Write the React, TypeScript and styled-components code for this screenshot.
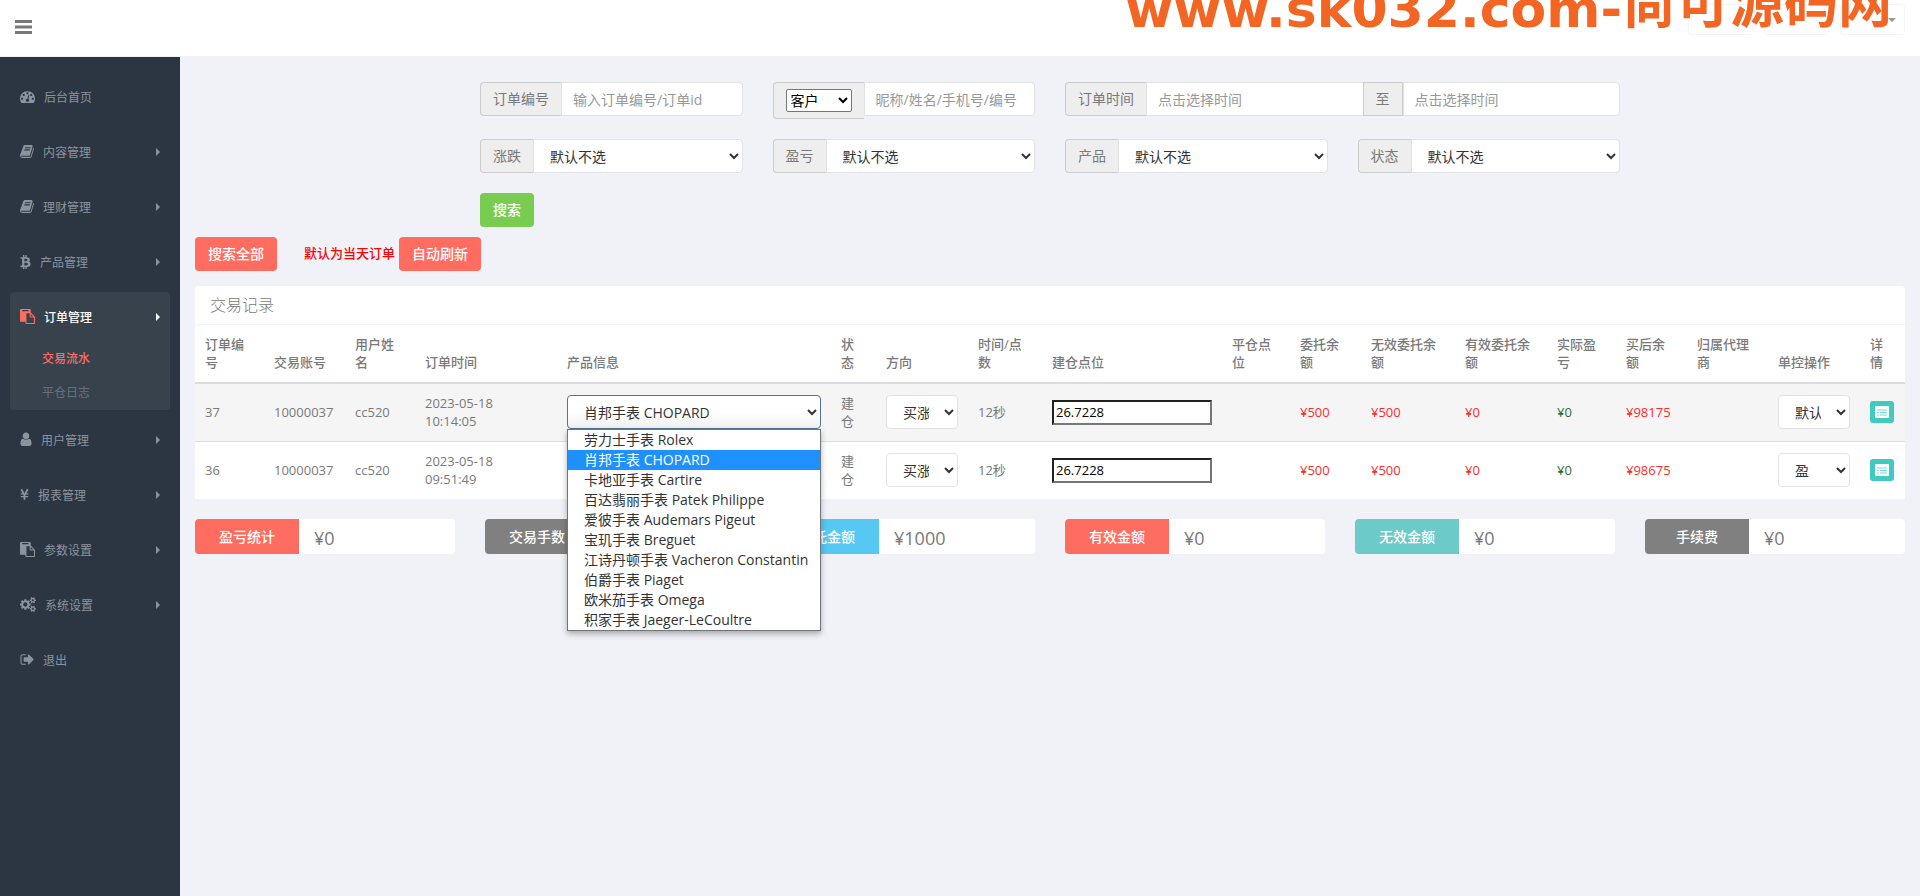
import React from "react";
import styled, { createGlobalStyle, css } from "styled-components";
import { FaBtc, FaYenSign } from "react-icons/fa";

const GlobalStyle = createGlobalStyle`
  *, *::before, *::after { box-sizing: border-box; }
  body {
    margin: 0;
    background: #f1f2f7;
    color: #797979;
    font-family: "Open Sans", "Noto Sans CJK SC", sans-serif;
    font-size: 13px;
    line-height: 18px;
  }
  button, input, select { font-family: inherit; }
  ul { list-style: none; margin: 0; padding: 0; }
`;

/* ---------- header ---------- */

const Header = styled.header`
  position: relative;
  display: flex;
  justify-content: space-between;
  height: 57px;
  padding: 0 15px;
  background: #fff;
  border-bottom: 1px solid #f1f2f7;
  overflow: hidden;
`;

const MenuToggle = styled.button`
  align-self: flex-start;
  display: flex;
  margin-top: 20px;
  padding: 0;
  border: 0;
  background: none;
  color: #797979;
`;

const TopMenu = styled.div`
  display: flex;
  gap: 11px;
  height: 35px;
  padding-top: 4px;
`;

const TopButton = styled.button`
  display: flex;
  align-items: center;
  justify-content: flex-end;
  width: 65px;
  padding: 0 8px;
  border: 1px solid #f5f5f5;
  border-radius: 4px;
  background: #fff;
  color: #999;
`;

const Watermark = styled.div`
  position: absolute;
  top: -37px;
  right: 28px;
  display: flex;
  align-items: flex-end;
  color: #f26522;
  font-weight: 700;
  white-space: nowrap;
`;

const WatermarkHost = styled.span`
  font-family: "DejaVu Sans", sans-serif;
  font-size: 52px;
  line-height: 56px;
`;

const WatermarkName = styled.span`
  font-family: "Noto Sans CJK SC", sans-serif;
  font-size: 54px;
  line-height: 74px;
`;

/* ---------- sidebar ---------- */

const Body = styled.div`
  display: flex;
  min-height: calc(100vh - 57px);
`;

const Sidebar = styled.nav`
  flex: 0 0 180px;
  padding: 15px 10px;
  background: #2b3642;
  font-size: 12px;
`;

const MenuItem = styled.li<{ $active?: boolean }>`
  margin-bottom: 5px;
  border-radius: 4px;
  background: ${(p) => (p.$active ? "#37424d" : "transparent")};
`;

const MenuLink = styled.a<{ $active?: boolean }>`
  display: flex;
  align-items: center;
  height: 50px;
  padding: 0 10px;
  color: ${(p) => (p.$active ? "#fff" : "#8b949d")};
  font-weight: ${(p) => (p.$active ? 500 : 400)};
  text-decoration: none;
`;

const MenuIcon = styled.span<{ $active?: boolean }>`
  display: flex;
  margin-right: 9px;
  padding-bottom: 1px;
  color: ${(p) => (p.$active ? "#ff6c60" : "inherit")};
`;

const MenuLabel = styled.span`
  padding-top: 2px;
`;

const MenuCaret = styled.svg`
  margin-left: auto;
`;

const SubMenu = styled.ul`
  padding: 0 0 0 32px;
`;

const SubLink = styled.a<{ $active?: boolean }>`
  display: block;
  color: ${(p) => (p.$active ? "#ff6c60" : "#66717c")};
  font-weight: ${(p) => (p.$active ? 500 : 400)};
  line-height: 34px;
  text-decoration: none;
`;

/* ---------- content ---------- */

const Content = styled.main`
  flex: 1;
  min-width: 0;
  padding: 25px 15px 15px;
`;

const Filters = styled.form`
  display: grid;
  grid-template-columns: repeat(4, 1fr);
  column-gap: 30px;
  row-gap: 20px;
  align-items: start;
  max-width: 1140px;
  margin: 0 auto;
`;

const Group = styled.div<{ $wide?: boolean }>`
  display: flex;
  align-items: flex-start;
  grid-column: span ${(p) => (p.$wide ? 2 : 1)};
`;

const addon = css`
  flex: none;
  padding: 6px 12px;
  border: 1px solid #ccc;
  background: #eee;
  font-size: 14px;
  line-height: 20px;
`;

const Addon = styled.label`
  ${addon}
  border-right: 0;
  border-radius: 4px 0 0 4px;
`;

const MiddleAddon = styled.label`
  ${addon}
`;

const AddonBox = styled.div`
  ${addon}
  display: flex;
  border-right: 0;
  border-radius: 4px 0 0 4px;
`;

const SmallSelect = styled.select`
  width: 66px;
  height: 23px;
  border: 1px solid #767676;
  border-radius: 2px;
  background: #fff;
  color: #000;
  font-size: 14px;
`;

const field = css`
  flex: 1;
  min-width: 0;
  width: 100%;
  height: 34px;
  padding: 6px 12px;
  border: 1px solid #e2e2e4;
  background: #fff;
  color: #333;
  font-size: 14px;
`;

const TextField = styled.input<{ $middle?: boolean }>`
  ${field}
  padding: 6px 11px;
  border-radius: ${(p) => (p.$middle ? "0" : "0 4px 4px 0")};
  border-right-width: ${(p) => (p.$middle ? "0" : "1px")};
  &::placeholder { color: #999; opacity: 1; }
`;

const SelectField = styled.select`
  ${field}
  border-radius: 0 4px 4px 0;
`;

const CellSelect = styled.select<{ $open?: boolean }>`
  ${field}
  display: block;
  border-radius: 4px;
  ${(p) =>
    p.$open &&
    css`
      border-color: #517397;
      background: linear-gradient(#fff 50%, #f0f0f0);
    `}
`;

const Button = styled.button<{ $tone: string }>`
  justify-self: start;
  height: 34px;
  padding: 0 13px;
  border: 0;
  border-radius: 4px;
  background: ${(p) => p.$tone};
  color: #fff;
  font-size: 14px;
  font-weight: 500;
  line-height: 20px;
`;

const Actions = styled.div`
  display: flex;
  align-items: center;
  margin: 10px 0 15px;
`;

const Hint = styled.span`
  margin: 0 4px 0 27px;
  padding-bottom: 3px;
  color: #f00;
  font-weight: 500;
`;

const Panel = styled.section`
  border-radius: 4px;
  background: #fff;
`;

const PanelTitle = styled.h2`
  margin: 0;
  padding: 0 15px;
  border-bottom: 1px solid #eff2f7;
  font-size: 16px;
  font-weight: 300;
  line-height: 38px;
`;

const DataTable = styled.table`
  width: 100%;
  table-layout: fixed;
  border-collapse: collapse;
`;

const HeadCell = styled.th`
  height: 58px;
  padding: 8px 10px 11px;
  border-bottom: 2px solid #ddd;
  font-weight: 500;
  text-align: left;
  vertical-align: bottom;
`;

const Row = styled.tr<{ $striped?: boolean }>`
  background: ${(p) => (p.$striped ? "#f5f5f5" : "#fff")};
  & + & { border-top: 1px solid #ddd; }
`;

const Cell = styled.td<{ $tone?: string }>`
  height: 58px;
  padding: 10px;
  color: ${(p) => p.$tone ?? "inherit"};
`;

const PriceInput = styled.input`
  display: block;
  width: 100%;
  height: 25px;
  padding: 1px 2px;
  border: 2px inset #767676;
  background: #fff;
  color: #000;
  font-size: 13px;
`;

const DetailButton = styled.button`
  display: flex;
  align-items: center;
  justify-content: center;
  width: 24px;
  height: 22px;
  padding: 0;
  border: 0;
  border-radius: 3px;
  background: #41cac0;
`;

const SelectAnchor = styled.div`
  position: relative;
`;

const OptionList = styled.ul`
  position: absolute;
  z-index: 2;
  top: 100%;
  left: 0;
  right: 0;
  border: 1px solid #70757c;
  background: #fff;
  box-shadow: 0 3px 6px rgba(0, 0, 0, 0.3);
  color: #333;
  font-size: 14px;
  line-height: 20px;
`;

const Option = styled.li<{ $selected?: boolean }>`
  height: 20px;
  padding: 0 16px;
  background: ${(p) => (p.$selected ? "#1e90ff" : "transparent")};
  color: ${(p) => (p.$selected ? "#fff" : "inherit")};
  white-space: nowrap;
`;

const Stats = styled.div`
  display: grid;
  grid-template-columns: repeat(6, 1fr);
  gap: 30px;
  margin-top: 20px;
`;

const Stat = styled.div`
  display: flex;
  height: 35px;
  border-radius: 4px;
  overflow: hidden;
  background: #fff;
`;

const StatLabel = styled.div<{ $tone: string }>`
  flex: 0 0 40%;
  background: ${(p) => p.$tone};
  color: #fff;
  font-size: 14px;
  font-weight: 500;
  line-height: 35px;
  text-align: center;
`;

const StatValue = styled.div`
  padding: 0 15px;
  font-size: 18px;
  line-height: 38px;
`;

/* ---------- icons ---------- */

type Glyph = { box: string; w: number; d: string };

const glyphs: Record<string, Glyph> = {
  dashboard: {
    box: "0 0 1792 1792",
    w: 15,
    d: "M384 1152q0-53-37.5-90.5t-90.5-37.5-90.5 37.5-37.5 90.5 37.5 90.5 90.5 37.5 90.5-37.5 37.5-90.5zm192-448q0-53-37.5-90.5t-90.5-37.5-90.5 37.5-37.5 90.5 37.5 90.5 90.5 37.5 90.5-37.5 37.5-90.5zm428 481l101-382q6-26-7.5-48.5t-38.5-29.5-48 6.5-30 39.5l-101 382q-60 5-107 43.5t-63 98.5q-20 77 20 146t117 89 146-20 89-117q16-60-6-117t-72-91zm660-33q0-53-37.5-90.5t-90.5-37.5-90.5 37.5-37.5 90.5 37.5 90.5 90.5 37.5 90.5-37.5 37.5-90.5zm-640-640q0-53-37.5-90.5t-90.5-37.5-90.5 37.5-37.5 90.5 37.5 90.5 90.5 37.5 90.5-37.5 37.5-90.5zm448 192q0-53-37.5-90.5t-90.5-37.5-90.5 37.5-37.5 90.5 37.5 90.5 90.5 37.5 90.5-37.5 37.5-90.5zm320 448q0 261-141 483-19 29-54 29h-1402q-35 0-54-29-141-221-141-483 0-182 71-348t191-286 286-191 348-71 348 71 286 191 191 286 71 348z",
  },
  book: {
    box: "64 0 1664 1792",
    w: 14,
    d: "M1703 478q40 57 18 129l-275 906q-19 64-76.5 107.5t-122.5 43.5h-923q-77 0-148.5-53.5t-99.5-131.5q-24-67-2-127 0-4 3-27t4-37q1-8-3-21.5t-3-19.5q2-11 8-21t16.5-23.5 16.5-23.5q23-38 45-91.5t30-91.5q3-10 .5-30t-.5-28q3-11 17-28t17-23q21-36 42-92t25-90q1-9-2.5-32t.5-28q4-13 22-30.5t22-22.5q19-26 42.5-84.5t27.5-96.5q1-8-3-25.5t-2-26.5q2-8 9-18t18-23 17-21q8-12 16.5-30.5t15-35 16-36 19.5-32 26.5-23.5 36-11.5 47.5 5.5l-1 3q38-9 51-9h761q74 0 114 56t18 130l-274 906q-36 119-71.5 153.5t-128.5 34.5h-869q-27 0-38 15-11 16-1 43 24 70 144 70h923q29 0 56-15.5t35-41.5l300-987q7-22 5-57 38 15 59 43zm-1064 2q-4 13 2 22.5t20 9.5h608q13 0 25.5-9.5t16.5-22.5l21-64q4-13-2-22.5t-20-9.5h-608q-13 0-25.5 9.5t-16.5 22.5zm-83 256q-4 13 2 22.5t20 9.5h608q13 0 25.5-9.5t16.5-22.5l21-64q4-13-2-22.5t-20-9.5h-608q-13 0-25.5 9.5t-16.5 22.5z",
  },
  paste: {
    box: "0 0 1792 1792",
    w: 15,
    d: "M768 1664h896v-640h-416q-40 0-68-28t-28-68v-416h-384v1152zm256-1440v-64q0-13-9.5-22.5t-22.5-9.5h-704q-13 0-22.5 9.5t-9.5 22.5v64q0 13 9.5 22.5t22.5 9.5h704q13 0 22.5-9.5t9.5-22.5zm256 672h299l-299-299v299zm512 128v672q0 40-28 68t-68 28h-960q-40 0-68-28t-28-68v-160h-544q-40 0-68-28t-28-68v-1344q0-40 28-68t68-28h1088q40 0 68 28t28 68v328q21 13 36 28l408 408q28 28 48 76t20 88z",
  },
  user: {
    box: "256 64 1280 1728",
    w: 12,
    d: "M1536 1399q0 109-62.5 187t-150.5 78h-854q-88 0-150.5-78t-62.5-187q0-85 8.5-160.5t31.5-152 58.5-131 94-89 134.5-34.5q131 128 313 128t313-128q76 0 134.5 34.5t94 89 58.5 131 31.5 152 8.5 160.5zm-256-887q0 159-112.5 271.5t-271.5 112.5-271.5-112.5-112.5-271.5 112.5-271.5 271.5-112.5 271.5 112.5 112.5 271.5z",
  },
  cogs: {
    box: "-64 0 1920 1792",
    w: 16,
    d: "M832 896q0-106-75-181t-181-75-181 75-75 181 75 181 181 75 181-75 75-181zm768 512q0-52-38-90t-90-38-90 38-38 90q0 53 37.5 90.5t90.5 37.5 90.5-37.5 37.5-90.5zm0-1024q0-52-38-90t-90-38-90 38-38 90q0 53 37.5 90.5t90.5 37.5 90.5-37.5 37.5-90.5zm-384 421v185q0 10-7 19.5t-16 10.5l-155 24q-11 35-32 76 34 48 90 115 7 11 7 20 0 12-7 19-23 30-82.5 89.5t-78.5 59.5q-11 0-21-7l-115-90q-37 19-77 31-11 108-23 155-7 24-30 24h-186q-11 0-20-7.5t-10-17.5l-23-153q-34-10-75-31l-118 89q-7 7-20 7-11 0-21-8-144-133-144-160 0-9 7-19 10-14 41-53t47-61q-23-44-35-82l-152-24q-10-1-17-9.5t-7-19.5v-185q0-10 7-19.5t16-10.5l155-24q11-35 32-76-34-48-90-115-7-11-7-20 0-12 7-20 22-30 82-89t79-59q11 0 21 7l115 90q34-18 77-32 11-108 23-154 7-24 30-24h186q11 0 20 7.5t10 17.5l23 153q34 10 75 31l118-89q8-7 20-7 11 0 21 8 144 133 144 160 0 8-7 19-12 16-42 54t-45 60q23 48 34 82l152 23q10 2 17 10.5t7 19.5zm640 533v140q0 16-149 31-12 27-30 52 51 113 51 138 0 4-4 7-122 71-124 71-8 0-46-47t-52-68q-20 2-30 2t-30-2q-14 21-52 68t-46 47q-2 0-124-71-4-3-4-7 0-25 51-138-18-25-30-52-149-15-149-31v-140q0-16 149-31 13-29 30-52-51-113-51-138 0-4 4-7 4-2 35-20t59-34 30-16q8 0 46 46.5t52 67.5q20-2 30-2t30 2q51-71 92-112l6-2q4 0 124 70 4 3 4 7 0 25-51 138 17 23 30 52 149 15 149 31zm0-1024v140q0 16-149 31-12 27-30 52 51 113 51 138 0 4-4 7-122 71-124 71-8 0-46-47t-52-68q-20 2-30 2t-30-2q-14 21-52 68t-46 47q-2 0-124-71-4-3-4-7 0-25 51-138-18-25-30-52-149-15-149-31v-140q0-16 149-31 13-29 30-52-51-113-51-138 0-4 4-7 4-2 35-20t59-34 30-16q8 0 46 46.5t52 67.5q20-2 30-2t30 2q51-71 92-112l6-2q4 0 124 70 4 3 4 7 0 25-51 138 17 23 30 52 149 15 149 31z",
  },
  exit: {
    box: "64 0 1568 1792",
    w: 14,
    d: "M704 1440q0 4 1 20t.5 26.5-3 23.5-10 19.5-20.5 6.5h-320q-119 0-203.5-84.5t-84.5-203.5v-704q0-119 84.5-203.5t203.5-84.5h320q13 0 22.5 9.5t9.5 22.5q0 4 1 20t.5 26.5-3 23.5-10 19.5-20.5 6.5h-320q-66 0-113 47t-47 113v704q0 66 47 113t113 47h312l11.5 1 11.5 3 8 5.5 7 9 2 13.5zm928-544q0 26-19 45l-544 544q-19 19-45 19t-45-19-19-45v-288h-448q-26 0-45-19t-19-45v-384q0-26 19-45t45-19h448v-288q0-26 19-45t45-19 45 19l544 544q19 19 19 45z",
  },
};

const BtcIcon = styled(FaBtc)`
  width: 11px;
  height: 14px;
`;

const YenIcon = styled(FaYenSign)`
  width: 9px;
  height: 13px;
`;

function Icon({ name }: { name: string }) {
  if (name === "btc") return <BtcIcon />;
  if (name === "yen") return <YenIcon />;
  const g = glyphs[name];
  return (
    <svg viewBox={g.box} width={g.w} height={15} fill="currentColor" aria-hidden="true">
      <path d={g.d} />
    </svg>
  );
}

/* ---------- data ---------- */

const menu = [
  { icon: "dashboard", label: "后台首页" },
  { icon: "book", label: "内容管理", more: true },
  { icon: "book", label: "理财管理", more: true },
  { icon: "btc", label: "产品管理", more: true },
  { icon: "paste", label: "订单管理", more: true, active: true, sub: ["交易流水", "平仓日志"] },
  { icon: "user", label: "用户管理", more: true },
  { icon: "yen", label: "报表管理", more: true },
  { icon: "paste", label: "参数设置", more: true },
  { icon: "cogs", label: "系统设置", more: true },
  { icon: "exit", label: "退出" },
];

const columns: [string, number][] = [
  ["订单编号", 69],
  ["交易账号", 81],
  ["用户姓名", 70],
  ["订单时间", 142],
  ["产品信息", 274],
  ["状态", 45],
  ["方向", 92],
  ["时间/点数", 74],
  ["建仓点位", 180],
  ["平仓点位", 68],
  ["委托余额", 71],
  ["无效委托余额", 94],
  ["有效委托余额", 92],
  ["实际盈亏", 69],
  ["买后余额", 71],
  ["归属代理商", 81],
  ["单控操作", 92],
  ["详情", 45],
];

const products = [
  "劳力士手表 Rolex",
  "肖邦手表 CHOPARD",
  "卡地亚手表 Cartire",
  "百达翡丽手表 Patek Philippe",
  "爱彼手表 Audemars Pigeut",
  "宝玑手表 Breguet",
  "江诗丹顿手表 Vacheron Constantin",
  "伯爵手表 Piaget",
  "欧米茄手表 Omega",
  "积家手表 Jaeger-LeCoultre",
];

const orders = [
  { id: "37", date: "2023-05-18", time: "10:14:05", after: "¥98175", control: "默认", open: true },
  { id: "36", date: "2023-05-18", time: "09:51:49", after: "¥98675", control: "盈", open: false },
];

const stats = [
  { label: "盈亏统计", value: "¥0", tone: "#ff6c60" },
  { label: "交易手数", value: "2", tone: "#808080" },
  { label: "委托金额", value: "¥1000", tone: "#57c8f2" },
  { label: "有效金额", value: "¥0", tone: "#ff6c60" },
  { label: "无效金额", value: "¥0", tone: "#6ccac9" },
  { label: "手续费", value: "¥0", tone: "#808080" },
];

const RED = "#fb2c2c";
const GREEN = "#2f6b3a";

function SelectFilter({ id, label }: { id: string; label: string }) {
  return (
    <Group>
      <Addon htmlFor={id}>{label}</Addon>
      <SelectField id={id}>
        <option>默认不选</option>
      </SelectField>
    </Group>
  );
}

export default function App() {
  return (
    <>
      <GlobalStyle />
      <Header>
        <MenuToggle aria-label="菜单">
          <svg width="18" height="14" fill="currentColor" aria-hidden="true">
            <path d="M0 0h17v3H0zM0 5.500h17v3H0zM0 11h17v3H0z" />
          </svg>
        </MenuToggle>
        <TopMenu>
          <TopButton aria-label="消息" />
          <TopButton aria-label="通知" />
          <TopButton aria-label="账户">
            <svg width="8" height="4" fill="currentColor" aria-hidden="true">
              <path d="M0 0h8l-4 4z" />
            </svg>
          </TopButton>
        </TopMenu>
        <Watermark>
          <WatermarkHost>www.sk032.com-</WatermarkHost>
          <WatermarkName>尚可源码网</WatermarkName>
        </Watermark>
      </Header>

      <Body>
        <Sidebar>
          <ul>
            {menu.map((m) => (
              <MenuItem key={m.label} $active={m.active}>
                <MenuLink href="#" $active={m.active}>
                  <MenuIcon $active={m.active}>
                    <Icon name={m.icon} />
                  </MenuIcon>
                  <MenuLabel>{m.label}</MenuLabel>
                  {m.more && (
                    <MenuCaret width="4" height="8" fill="currentColor" aria-hidden="true">
                      <path d="M0 0l4 4-4 4z" />
                    </MenuCaret>
                  )}
                </MenuLink>
                {m.sub && (
                  <SubMenu>
                    {m.sub.map((s, i) => (
                      <li key={s}>
                        <SubLink href="#" $active={i === 0}>
                          {s}
                        </SubLink>
                      </li>
                    ))}
                  </SubMenu>
                )}
              </MenuItem>
            ))}
          </ul>
        </Sidebar>

        <Content>
          <Filters>
            <Group>
              <Addon htmlFor="order-id">订单编号</Addon>
              <TextField id="order-id" placeholder="输入订单编号/订单id" />
            </Group>
            <Group>
              <AddonBox>
                <SmallSelect aria-label="用户类型">
                  <option>客户</option>
                </SmallSelect>
              </AddonBox>
              <TextField aria-label="用户" placeholder="昵称/姓名/手机号/编号" />
            </Group>
            <Group $wide>
              <Addon htmlFor="time-from">订单时间</Addon>
              <TextField id="time-from" $middle placeholder="点击选择时间" />
              <MiddleAddon htmlFor="time-to">至</MiddleAddon>
              <TextField id="time-to" placeholder="点击选择时间" />
            </Group>
            <SelectFilter id="trend" label="涨跌" />
            <SelectFilter id="profit" label="盈亏" />
            <SelectFilter id="product" label="产品" />
            <SelectFilter id="status" label="状态" />
            <Button type="button" $tone="#78cd51">
              搜索
            </Button>
          </Filters>

          <Actions>
            <Button $tone="#ff6c60">搜索全部</Button>
            <Hint>默认为当天订单</Hint>
            <Button $tone="#ff6c60">自动刷新</Button>
          </Actions>

          <Panel>
            <PanelTitle>交易记录</PanelTitle>
            <DataTable>
              <colgroup>
                {columns.map(([name, width]) => (
                  <col key={name} style={{ width }} />
                ))}
              </colgroup>
              <thead>
                <tr>
                  {columns.map(([name]) => (
                    <HeadCell key={name} scope="col">
                      {name}
                    </HeadCell>
                  ))}
                </tr>
              </thead>
              <tbody>
                {orders.map((o) => (
                  <Row key={o.id} $striped={o.open}>
                    <Cell>{o.id}</Cell>
                    <Cell>10000037</Cell>
                    <Cell>cc520</Cell>
                    <Cell>
                      {o.date}
                      <br />
                      {o.time}
                    </Cell>
                    <Cell>
                      <SelectAnchor>
                        <CellSelect aria-label="产品信息" $open={o.open} defaultValue={products[1]}>
                          {products.map((p) => (
                            <option key={p}>{p}</option>
                          ))}
                        </CellSelect>
                        {o.open && (
                          <OptionList role="listbox" aria-label="产品列表">
                            {products.map((p, i) => (
                              <Option key={p} role="option" aria-selected={i === 1} $selected={i === 1}>
                                {p}
                              </Option>
                            ))}
                          </OptionList>
                        )}
                      </SelectAnchor>
                    </Cell>
                    <Cell>建仓</Cell>
                    <Cell>
                      <CellSelect aria-label="方向">
                        <option>买涨</option>
                      </CellSelect>
                    </Cell>
                    <Cell>12秒</Cell>
                    <Cell>
                      <PriceInput aria-label="建仓点位" defaultValue="26.7228" />
                    </Cell>
                    <Cell />
                    <Cell $tone={RED}>¥500</Cell>
                    <Cell $tone={RED}>¥500</Cell>
                    <Cell $tone={RED}>¥0</Cell>
                    <Cell $tone={GREEN}>¥0</Cell>
                    <Cell $tone={RED}>{o.after}</Cell>
                    <Cell />
                    <Cell>
                      <CellSelect aria-label="单控操作">
                        <option>{o.control}</option>
                      </CellSelect>
                    </Cell>
                    <Cell>
                      <DetailButton aria-label="详情">
                        <svg width="14" height="12" fill="#fff" aria-hidden="true">
                          <rect width="14" height="12" rx="1" />
                          <path
                            d="M2 4h10M2 6.500h2M5 6.500h7M2 9h2M5 9h7"
                            stroke="#41cac0"
                            strokeOpacity="0.7"
                          />
                        </svg>
                      </DetailButton>
                    </Cell>
                  </Row>
                ))}
              </tbody>
            </DataTable>
          </Panel>

          <Stats>
            {stats.map((s) => (
              <Stat key={s.label}>
                <StatLabel $tone={s.tone}>{s.label}</StatLabel>
                <StatValue>{s.value}</StatValue>
              </Stat>
            ))}
          </Stats>
        </Content>
      </Body>
    </>
  );
}
